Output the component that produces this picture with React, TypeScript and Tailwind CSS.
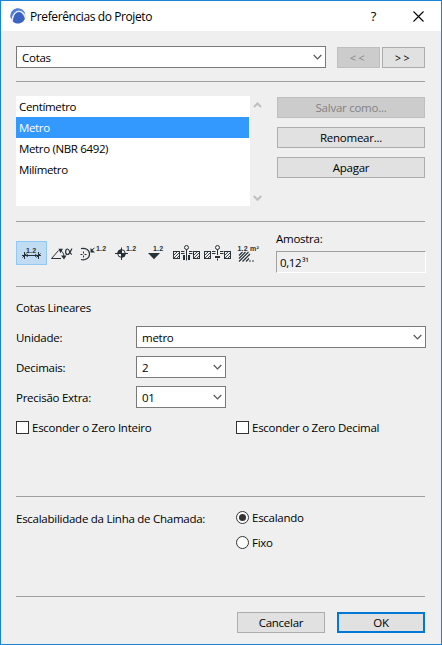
import { useState } from 'react';
import type { ReactNode } from 'react';

const standards = ['Centímetro', 'Metro', 'Metro (NBR 6492)', 'Milímetro'];

function Logo() {
  return (
    <svg width="16" height="16" viewBox="0 0 16 16">
      <circle cx="8" cy="8" r="7.6" fill="#dbe3f5" />
      <path d="M0.4 9 A7.6 7.6 0 0 1 15.5 6.8 C13 2.8 9 1.6 6 3.6 C3.4 5.2 2 8 1.6 11.6 Z" fill="#4f7fd6" />
      <path d="M2.8 13 C3.6 7 6 4.2 8.6 4 C11.6 3.8 14 7.5 14.9 11 A7.6 7.6 0 0 1 3.4 14 Z" fill="#3a63c2" />
      <path d="M2 12.6 C2.8 7 5.2 3.6 8.4 3.2 C11 3 13.4 4.8 15 8" fill="none" stroke="#e8eefb" strokeWidth="0.9" />
    </svg>
  );
}

function Chevron({ up = false, color = '#555', heavy = false }: { up?: boolean; color?: string; heavy?: boolean }) {
  return (
    <svg width="9" height="6" viewBox="0 0 9 6" fill="none" stroke={color} strokeWidth={heavy ? 2 : 1.2}>
      <path d={up ? 'M1 5 L4.5 1.5 L8 5' : 'M0.7 1 L4.5 4.8 L8.3 1'} />
    </svg>
  );
}

function Combo({ value, className }: { value: string; className: string }) {
  return (
    <div className={`flex h-[22px] items-center justify-between border border-[#7a7a7a] bg-white pr-[3px] pl-[5px] ${className}`}>
      <span>{value}</span>
      <Chevron />
    </div>
  );
}

function Button({ children, className = '', disabled = false, primary = false }: {
  children: ReactNode;
  className?: string;
  disabled?: boolean;
  primary?: boolean;
}) {
  const tone = disabled
    ? 'border border-[#bfbfbf] bg-[#cccccc] text-[#838383]'
    : primary
      ? 'border-2 border-[#0078d7] bg-[#e1e1e1]'
      : 'border border-[#adadad] bg-[#e1e1e1]';
  return (
    <button disabled={disabled} className={`flex h-[21px] items-center justify-center ${tone} ${className}`}>
      {children}
    </button>
  );
}

function Num({ x, y, children = '1.2' }: { x: number; y: number; children?: string }) {
  return (
    <text x={x} y={y} fontSize="7" fontWeight="bold" letterSpacing="0.2" fontFamily="Liberation Sans, sans-serif" fill="#263238" stroke="none">
      {children}
    </text>
  );
}

function HatchedBox({ x }: { x: number }) {
  return (
    <g>
      <rect x={x + 0.5} y="10.5" width="6" height="7" strokeWidth="1" />
      <path d={`M${x + 1} 14 l3 -3 M${x + 1} 17 l5.5 -5.5 M${x + 4} 17 l2.5 -2.5`} strokeWidth="0.9" />
    </g>
  );
}

const tools: ReactNode[] = [
  <>
    <Num x={10} y={11.5}>1.2</Num>
    <path d="M6 14.5 H25 M8.5 11 V18 M22.5 11 V18" />
    <path d="M6.5 16.5 l4 -4 M20.5 16.5 l4 -4" />
    <path d="M9 14.5 l3 -1.5 v3z M22 14.5 l-3 -1.5 v3z" fill="#263238" stroke="none" />
  </>,
  <>
    <path d="M11.5 9.5 L4.5 17.5 H14 M12 9 C15 9.5 17 12 17 16" />
    <path d="M11.5 7.8 l4.5 0 l-2.5 4.5z M14 14.5 h5.5 l-2.5 4z" fill="#263238" stroke="none" />
    <path d="M25 7.5 C23.5 10 22.5 13.5 20.5 13.5 C18 13.5 18 8 20.5 8 C22.5 8 23 13.5 25 13.5" strokeWidth="1.2" />
  </>,
  <>
    <path d="M3 7.7 C7 6.8 11.5 8.5 11.5 13 C11.5 17.5 7 19.6 3 18.5" strokeWidth="1.2" />
    <path d="M5.5 10.5 V12.5 M5.5 14.5 V16.5 M2.5 13.5 H4.5 M6.5 13.5 H8.5 M13 9.5 L16.5 7" />
    <path d="M12.5 7 v4.5 h4.5z" fill="#263238" stroke="none" />
    <Num x={18} y={9.5}>1.2</Num>
  </>,
  <>
    <circle cx="11.5" cy="12.5" r="3.8" fill="#efefef" />
    <path d="M11.5 12.5 V8.5 A4 4 0 0 0 7.5 12.5z M11.5 12.5 V16.5 A4 4 0 0 0 15.5 12.5z" fill="#263238" stroke="none" />
    <path d="M5 12.5 H18 M11.5 6.5 V19" />
    <Num x={16} y={9.5}>1.2</Num>
  </>,
  <>
    <Num x={12} y={9.5}>1.2</Num>
    <path d="M7 12 h12 l-6 6.2z" fill="#263238" stroke="none" />
  </>,
  <>
    <HatchedBox x={1} />
    <HatchedBox x={21} />
    <circle cx="14.5" cy="6.5" r="2" />
    <path d="M14.5 8.5 V19.5 M9 10.5 h3.5 M9 12.5 h3.5 M17 10.5 h3.5 M17 12.5 h3.5" />
    <path d="M11 14 h2 v5 h-2z M16 14 h2 v5 h-2z" fill="#263238" stroke="none" />
  </>,
  <>
    <HatchedBox x={1} />
    <HatchedBox x={21} />
    <circle cx="14.5" cy="6.5" r="2" />
    <path d="M14.5 8.5 V14 M14.5 17.5 V19.5 M9 10.5 h3.5 M9 12.5 h3.5 M17 10.5 h3.5 M17 12.5 h3.5" />
    <path d="M12 15 h5 v2 h-5z" fill="#263238" stroke="none" />
  </>,
  <>
    <Num x={3.5} y={9.5}>1.2 m²</Num>
    <path d="M5 14.5 l3.5 -3.5 M5 17.5 l6.5 -6.5 M5 20.5 l9.5 -9.5 M8.5 20.5 l7.5 -7.5 M12 20.5 l3 -3 M15.5 20.5 l1 -1 M18.5 20.5 l1 -1" strokeWidth="1.2" />
  </>,
];

function Check({ label, className = '' }: { label: string; className?: string }) {
  return (
    <label className={`flex h-[13px] items-center gap-[3px] ${className}`}>
      <span className="size-[13px] border border-[#333] bg-white" />
      {label}
    </label>
  );
}

function Radio({ label, checked = false }: { label: string; checked?: boolean }) {
  return (
    <label className="flex h-[13px] items-center gap-[3px]">
      <span className="flex size-[13px] items-center justify-center rounded-full border border-[#333] bg-white">
        {checked && <span className="size-[7px] rounded-full bg-[#333]" />}
      </span>
      {label}
    </label>
  );
}

export default function App() {
  const [selected, setSelected] = useState('Metro');
  const [tool, setTool] = useState(0);

  return (
    <div className="flex h-[645px] w-[442px] flex-col border border-[#1883d7] bg-[#efefef] font-['Open_Sans',sans-serif] text-[11.5px] leading-[15px] tracking-[-0.26px] whitespace-nowrap text-black">
      <header className="flex h-[30px] shrink-0 items-center bg-white pl-[9px]">
        <Logo />
        <h1 className="ml-1 flex-1 text-[12px] tracking-[-0.4px]">Preferências do Projeto</h1>
        <span className="w-[7px] text-center text-[13px] font-medium">?</span>
        <svg className="mr-[17px] ml-[36px]" width="11" height="11" viewBox="0 0 11 11" stroke="#000" strokeWidth="1.1">
          <path d="M0.5 0.5 L10.5 10.5 M10.5 0.5 L0.5 10.5" />
        </svg>
      </header>

      <main className="flex flex-1 flex-col pr-4 pl-[15px]">
        <section className="flex h-[51px] items-start border-b border-[#a0a0a0] pt-[15px]">
          <Combo value="Cotas" className="w-[310px]" />
          <Button disabled className="mt-px ml-[11px] w-[43px] pt-px text-[10.5px] tracking-[2.5px]">&lt;&lt;</Button>
          <Button className="mt-px ml-[2px] w-[43px] pt-px text-[10.5px] tracking-[2.5px]">&gt;&gt;</Button>
        </section>

        <section className="flex h-[140px] border-b border-[#a0a0a0] pt-[14px]">
          <ul className="h-[110px] w-[234px] bg-white pr-px tracking-[-0.35px]">
            {standards.map((name) => (
              <li
                key={name}
                onClick={() => setSelected(name)}
                className={`flex h-[21px] items-center pl-[3px] ${selected === name ? 'bg-[#3399ff] text-white' : ''}`}
              >
                {name}
              </li>
            ))}
          </ul>
          <div className="ml-[3px] flex h-[110px] flex-col justify-between pt-[6px] pb-[5px]">
            <Chevron up heavy color="#bfbfbf" />
            <Chevron heavy color="#bfbfbf" />
          </div>
          <div className="mt-px ml-auto flex w-[148px] flex-col gap-[9px]">
            <Button disabled>Salvar como...</Button>
            <Button>Renomear...</Button>
            <Button>Apagar</Button>
          </div>
        </section>

        <section className="flex h-[65px] border-b border-[#a0a0a0]">
          <div className="flex pt-[19px]">
            {tools.map((icon, i) => (
              <button
                key={i}
                onClick={() => setTool(i)}
                className={`h-6 w-[31px] ${i === 3 ? 'ml-px' : ''} ${tool === i ? 'bg-[#c0dcf3] outline-1 -outline-offset-1 outline-[#90c8f6]' : ''}`}
              >
                <svg width="31" height="24" viewBox="0 0 31 24" fill="none" stroke="#263238" strokeWidth="1">
                  {icon}
                </svg>
              </button>
            ))}
          </div>
          <div className="ml-[11px] flex-1 pt-[9px]">
            <div>Amostra:</div>
            <div className="mt-[5px] flex h-[22px] w-[150px] items-center border border-t-[#a0a0a0] border-r-white border-b-white border-l-[#a0a0a0] pl-[3px]">
              <span className="tracking-[-0.4px]">0,12</span>
              <span className="ml-px text-[10px]">³¹</span>
            </div>
          </div>
        </section>

        <section className="h-[210px] border-b border-[#a0a0a0] pt-[13px]">
          <h2>Cotas Lineares</h2>
          <div className="mt-[11px] grid w-[410px] grid-cols-[120px_1fr] items-center gap-y-2">
            <span>Unidade:</span>
            <Combo value="metro" className="w-[290px]" />
            <span>Decimais:</span>
            <Combo value="2" className="w-[90px]" />
            <span>Precisão Extra:</span>
            <Combo value="01" className="w-[90px]" />
          </div>
          <div className="mt-[13px] flex">
            <Check label="Esconder o Zero Inteiro" className="w-[220px]" />
            <Check label="Esconder o Zero Decimal" />
          </div>
        </section>

        <section className="flex h-[100px] border-b border-[#a0a0a0] pt-[14px]">
          <span className="w-[220px]">Escalabilidade da Linha de Chamada:</span>
          <div className="flex flex-col gap-3">
            <Radio label="Escalando" checked />
            <Radio label="Fixo" />
          </div>
        </section>

        <footer className="flex justify-end gap-3 pt-[15px]">
          <Button className="w-[88px]">Cancelar</Button>
          <Button primary className="w-[88px]">OK</Button>
        </footer>
      </main>
    </div>
  );
}
